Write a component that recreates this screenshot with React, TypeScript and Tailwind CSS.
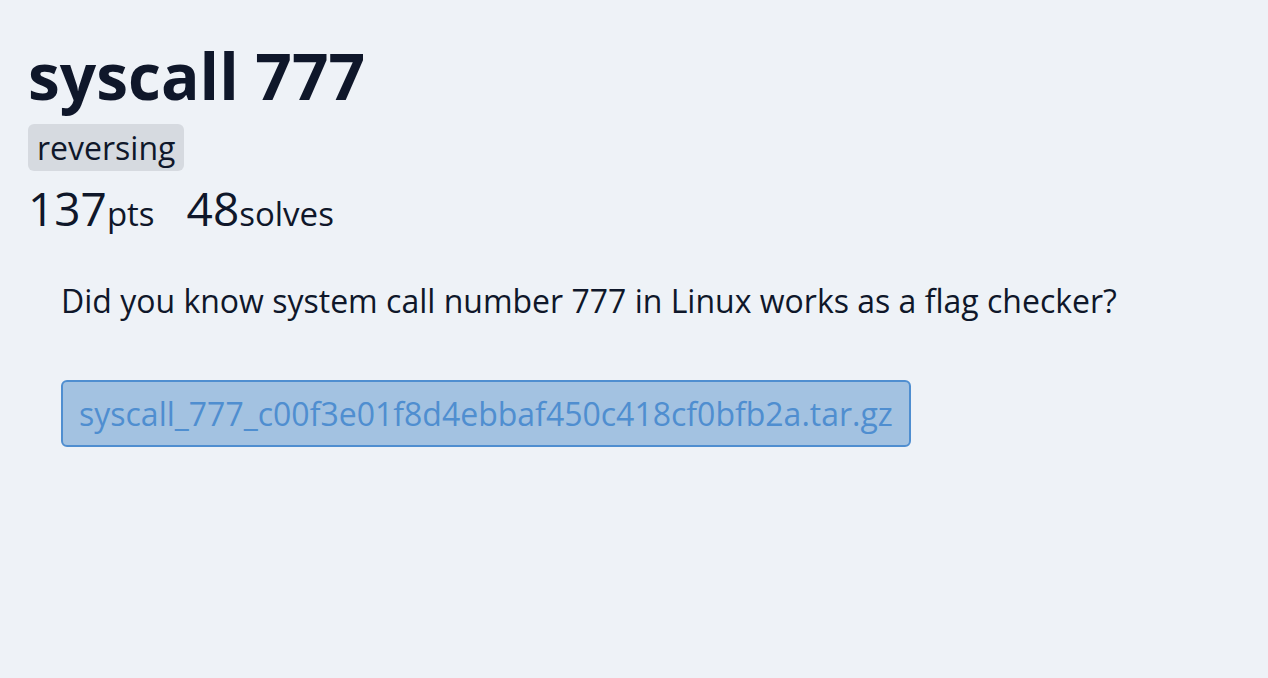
export default function App() {
  return (
    <div
      className="min-h-[678px] w-full bg-[#eef2f7] text-[#0f172a] px-[28px] pt-[38px]"
      style={{ fontFamily: '"Open Sans", sans-serif' }}
    >
      <h1 className="text-[64px] font-bold leading-[76px]">syscall 777</h1>
      <div className="mt-[10px] flex">
        <span className="rounded-[6px] bg-[#d6dae0] px-[9px] text-[32px] leading-[47px]">reversing</span>
      </div>
      <div className="flex items-baseline gap-[32px] leading-[74px]">
        <div>
          <span className="text-[46px]">137</span>
          <span className="text-[33px]">pts</span>
        </div>
        <div>
          <span className="text-[46px]">48</span>
          <span className="text-[33px]">solves</span>
        </div>
      </div>
      <div className="px-[33px] pt-[22px]">
        <p className="text-[32px] leading-[44px]">
          Did you know system call number 777 in Linux works as a flag checker?
        </p>
        <div className="mt-[57px] flex">
          <a className="rounded-[6px] border-2 border-[#4f8ed0] bg-[#a3c2e1] px-[16px] text-[32px] leading-[63px] text-[#4f8ed0]">
            syscall_777_c00f3e01f8d4ebbaf450c418cf0bfb2a.tar.gz
          </a>
        </div>
      </div>
    </div>
  );
}
